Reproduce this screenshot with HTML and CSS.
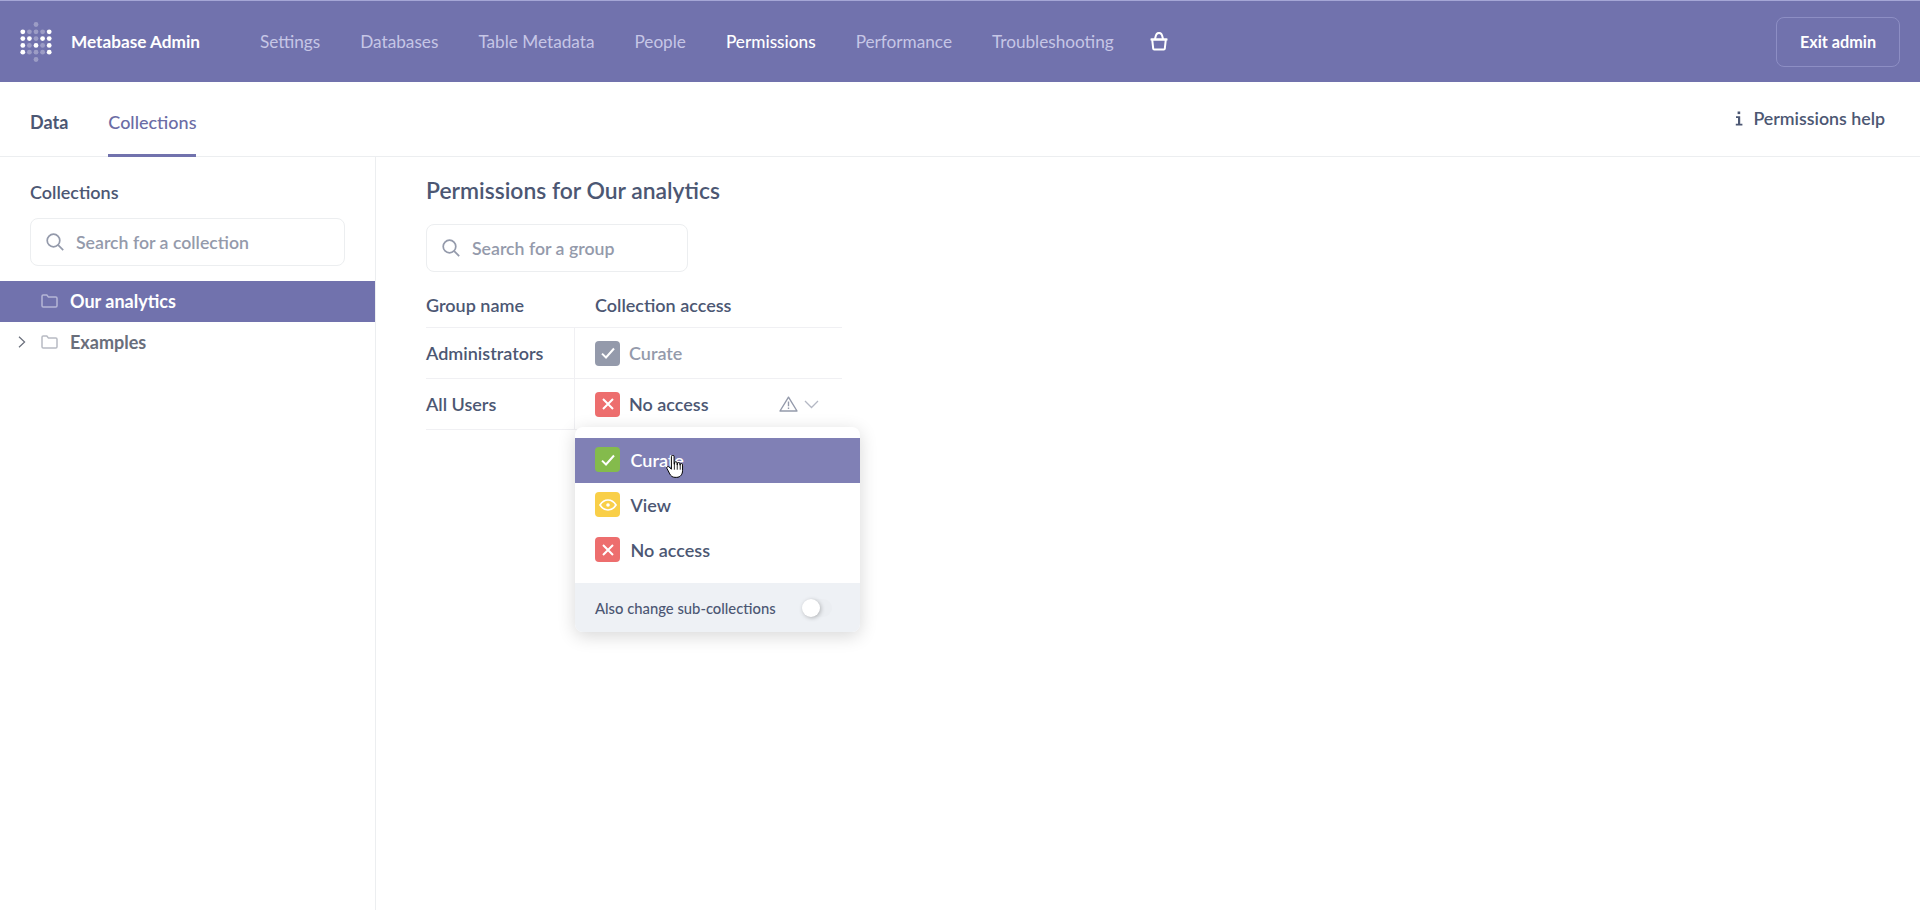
FILE: index.html
```html
<!DOCTYPE html>
<html lang="en">
<head>
  <meta charset="UTF-8">
  <title>Permissions - Metabase Admin</title>
  <link rel="stylesheet" href="styles.css">
</head>
<body>
  <header class="topbar">
    <div class="brand">
      <svg class="brand-logo" width="32" height="40" viewBox="0 0 32 40" fill="#fff">
        <g opacity="0.3">
          <circle cx="16" cy="2.5" r="2.4"/><circle cx="16" cy="37.5" r="2.4"/>
          <circle cx="9.4" cy="9.8" r="2.4"/><circle cx="16" cy="9.8" r="2.4"/><circle cx="22.6" cy="9.8" r="2.4"/>
          <circle cx="16" cy="16.6" r="2.4"/>
          <circle cx="9.4" cy="23.4" r="2.4"/><circle cx="22.6" cy="23.4" r="2.4"/>
          <circle cx="9.4" cy="30.2" r="2.4"/><circle cx="16" cy="30.2" r="2.4"/><circle cx="22.6" cy="30.2" r="2.4"/>
        </g>
        <circle cx="2.8" cy="9.8" r="2.4"/><circle cx="29.2" cy="9.8" r="2.4"/>
        <circle cx="2.8" cy="16.6" r="2.4"/><circle cx="9.4" cy="16.6" r="2.4"/><circle cx="22.6" cy="16.6" r="2.4"/><circle cx="29.2" cy="16.6" r="2.4"/>
        <circle cx="2.8" cy="23.4" r="2.4"/><circle cx="16" cy="23.4" r="2.4"/><circle cx="29.2" cy="23.4" r="2.4"/>
        <circle cx="2.8" cy="30.2" r="2.4"/><circle cx="29.2" cy="30.2" r="2.4"/>
      </svg>
      <span class="brand-name">Metabase Admin</span>
    </div>
    <nav class="topnav">
      <a>Settings</a>
      <a>Databases</a>
      <a>Table Metadata</a>
      <a>People</a>
      <a class="active">Permissions</a>
      <a>Performance</a>
      <a>Troubleshooting</a>
      <svg class="bag" width="18" height="19" viewBox="0 0 18 19" fill="none" stroke="#fff" stroke-width="2">
        <path d="M2.200 7.500h13.600l-1 9.200a1 1 0 0 1-1 .9H4.200a1 1 0 0 1-1-.9z"/>
        <path d="M.5 7.500h17M4.800 7.500L6 3.200a3.100 3.100 0 0 1 6 0l1.200 4.300"/>
      </svg>
    </nav>
    <button class="exit-btn">Exit admin</button>
  </header>

  <div class="tabbar">
    <div class="tabs">
      <a class="tab">Data</a>
      <a class="tab active">Collections</a>
    </div>
    <a class="help">
      <svg width="8" height="15" viewBox="0 0 8 15" fill="#4c5773">
        <rect x="2.6" y="0.5" width="2.6" height="2.6"/>
        <path d="M1 5.2h4.2v7.6H7.4v1.7H.8v-1.7h2.2V6.9H1z"/>
      </svg>
      Permissions help
    </a>
  </div>

  <div class="content">
    <aside class="sidebar">
      <div class="side-top">
        <h4 class="side-title">Collections</h4>
        <div class="search search-side">
          <svg class="search-icon" width="18" height="18" viewBox="0 0 18 18" fill="none" stroke="#949aab" stroke-width="1.700">
            <circle cx="7.500" cy="7.500" r="6.300"/><path d="M12.200 12.200l5 5"/>
          </svg>
          <span>Search for a collection</span>
        </div>
      </div>
      <div class="tree-row selected">
        <svg class="folder" width="17" height="14" viewBox="0 0 17 14" fill="none" stroke="#b5b6d6" stroke-width="1.5">
          <path d="M1 2.200A1.200 1.200 0 0 1 2.200 1h3.600l1.600 2h7.400A1.200 1.200 0 0 1 16 4.200v7.600a1.200 1.200 0 0 1-1.200 1.200H2.200A1.200 1.200 0 0 1 1 11.800z"/>
        </svg>
        Our analytics
      </div>
      <div class="tree-row">
        <svg class="caret" width="8" height="12" viewBox="0 0 8 12" fill="none" stroke="#696e7b" stroke-width="1.2">
          <path d="M1 .8L6.600 6 1 11.200"/>
        </svg>
        <svg class="folder" width="17" height="14" viewBox="0 0 17 14" fill="none" stroke="#b8bbc3" stroke-width="1.5">
          <path d="M1 2.200A1.200 1.200 0 0 1 2.200 1h3.600l1.600 2h7.400A1.200 1.200 0 0 1 16 4.200v7.600a1.200 1.200 0 0 1-1.200 1.200H2.200A1.200 1.200 0 0 1 1 11.800z"/>
        </svg>
        Examples
      </div>
    </aside>

    <main class="main">
      <h2 class="page-title">Permissions for Our analytics</h2>
      <div class="search search-group">
        <svg class="search-icon" width="18" height="18" viewBox="0 0 18 18" fill="none" stroke="#949aab" stroke-width="1.700">
          <circle cx="7.500" cy="7.500" r="6.300"/><path d="M12.200 12.200l5 5"/>
        </svg>
        <span>Search for a group</span>
      </div>

      <div class="perm-table">
        <div class="perm-row perm-head">
          <div class="col-name">Group name</div>
          <div class="col-access">Collection access</div>
        </div>
        <div class="perm-row">
          <div class="col-name">Administrators</div>
          <div class="col-access">
            <span class="badge grey">
              <svg width="16" height="16" viewBox="0 0 16 16" fill="none" stroke="#fff" stroke-width="2"><path d="M2 8.600l4 3.900 8-9"/></svg>
            </span>
            <span class="muted">Curate</span>
          </div>
        </div>
        <div class="perm-row">
          <div class="col-name">All Users</div>
          <div class="col-access">
            <span class="badge red">
              <svg width="14" height="14" viewBox="0 0 14 14" fill="none" stroke="#fff" stroke-width="2"><path d="M2 2l10 10M12 2L2 12"/></svg>
            </span>
            No access
            <span class="row-icons">
              <svg width="19" height="16" viewBox="0 0 19 16" fill="none" stroke="#949aab" stroke-width="1.400">
                <path d="M9.500 1.200L18 15H1z" stroke-linejoin="round"/><path d="M9.500 5.600v4.600M9.500 11.400v1.600"/>
              </svg>
              <svg width="15" height="9" viewBox="0 0 15 9" fill="none" stroke="#b4b8c4" stroke-width="1.300"><path d="M1 1l6.500 6.500L14 1"/></svg>
            </span>
          </div>
        </div>

        <div class="popover">
          <ul class="menu">
            <li class="menu-item hover">
              <span class="badge green">
                <svg width="16" height="16" viewBox="0 0 16 16" fill="none" stroke="#fff" stroke-width="2"><path d="M2 8.600l4 3.900 8-9"/></svg>
              </span>
              Curate
            </li>
            <li class="menu-item">
              <span class="badge yellow">
                <svg width="18" height="12" viewBox="0 0 18 12" fill="none" stroke="#fff" stroke-width="1.700">
                  <path d="M1 6c2-3.200 4.800-5 8-5s6 1.800 8 5c-2 3.200-4.800 5-8 5s-6-1.800-8-5z"/><circle cx="9" cy="6" r="1.800" fill="#fff" stroke="none"/>
                </svg>
              </span>
              View
            </li>
            <li class="menu-item">
              <span class="badge red">
                <svg width="14" height="14" viewBox="0 0 14 14" fill="none" stroke="#fff" stroke-width="2"><path d="M2 2l10 10M12 2L2 12"/></svg>
              </span>
              No access
            </li>
          </ul>
          <div class="popover-foot">
            <span>Also change sub-collections</span>
            <span class="toggle"><span class="knob"></span></span>
          </div>
          <svg class="cursor" width="18" height="24" viewBox="0 0 20 26">
            <path d="M6 1.500a1.500 1.500 0 0 1 3 0V10h.5V8.500a1.400 1.400 0 0 1 2.800 0V10.500h.4V9.500a1.400 1.400 0 0 1 2.800 0v1.500h.3v-.5a1.300 1.300 0 0 1 2.600 0V17c0 4-2.400 7.500-6.500 7.500H10c-3 0-4.500-1.500-5.800-3.800L1 14.500c-.7-1.500 1.300-2.800 2.500-1.500L6 15.500z" fill="#fff" stroke="#000" stroke-width="1.100" stroke-linejoin="round"/>
            <path d="M9.300 10v6M12.500 10v6M15.800 11v5" stroke="#000" stroke-width=".9" fill="none"/>
          </svg>
        </div>
      </div>
    </main>
  </div>
</body>
</html>
```

FILE: styles.css
```css
* {
  box-sizing: border-box;
}
html, body {
  height: 100%;
}
body {
  margin: 0;
  font-family: Lato, "Open Sans", sans-serif;
  color: #4c5773;
  background: #fff;
  overflow: hidden;
}

/* top bar */
.topbar {
  height: 81px;
  margin-top: 1px;
  background: #7172ad;
  box-shadow: 0 -1px 0 #a5a6d6;
  display: flex;
  align-items: center;
  padding: 0 20px 0 20px;
}
.brand {
  display: flex;
  align-items: center;
  width: 240px;
  flex-shrink: 0;
}
.brand-logo {
  margin-right: 19px;
}
.brand-name {
  color: #fff;
  font-size: 17.200px;
  font-weight: 700;
}
.topnav {
  display: flex;
  align-items: center;
  gap: 40px;
  flex: 1;
  font-size: 17.200px;
  color: #c6c6e6;
}
.topnav .active {
  color: #fff;
  font-weight: 500;
}
.bag {
  margin-left: -4px;
}
.exit-btn {
  width: 124px;
  height: 50px;
  background: transparent;
  border: 1px solid #8d8ec4;
  border-radius: 8px;
  color: #fff;
  font: 700 16.200px Lato, sans-serif;
}

/* tabs */
.tabbar {
  height: 75px;
  border-bottom: 1px solid #eceef0;
  display: flex;
  justify-content: space-between;
  padding: 0 35px 0 30px;
}
.tabs {
  display: flex;
  gap: 40px;
}
.tab {
  font-size: 18px;
  font-weight: 700;
  height: 75px;
  line-height: 80px;
}
.tab.active {
  color: #6b6ca5;
  font-weight: 500;
  border-bottom: 3px solid #7172ad;
}
.help {
  display: flex;
  align-items: center;
  gap: 10px;
  font-size: 17.800px;
  font-weight: 600;
  height: 72px;
}

.content {
  display: flex;
  height: 753px;
}

/* sidebar */
.sidebar {
  width: 376px;
  border-right: 1px solid #eceef0;
  flex-shrink: 0;
}
.side-top {
  padding: 0 30px;
}
.side-title {
  margin: 0;
  padding-top: 24px;
  height: 61px;
  font-size: 18px;
  font-weight: 600;
  line-height: 22px;
}
.search {
  display: flex;
  align-items: center;
  height: 48px;
  border: 1px solid #eceef0;
  border-radius: 8px;
  padding-left: 15px;
  gap: 12px;
  color: #949aab;
  font-size: 17.700px;
  font-weight: 600;
}
.search-icon {
  flex-shrink: 0;
}
.search-side {
  margin-bottom: 15px;
}
.tree-row {
  height: 41px;
  display: flex;
  align-items: center;
  padding: 0 0 2px 41px;
  font-size: 18px;
  font-weight: 700;
  color: #696e7b;
  position: relative;
}
.tree-row.selected {
  background: #7172ad;
  color: #fff;
}
.folder {
  margin-right: 12px;
}
.caret {
  position: absolute;
  left: 18px;
  top: 14px;
}

/* main panel */
.main {
  padding: 0 0 0 50px;
  flex: 1;
}
.page-title {
  margin: 0;
  padding-top: 19px;
  height: 67px;
  font-size: 22.900px;
  font-weight: 600;
  line-height: 28px;
}
.search-group {
  width: 262px;
}
.perm-table {
  width: 416px;
  margin-top: 8px;
  position: relative;
}
.perm-row {
  display: flex;
  height: 51px;
  border-bottom: 1px solid #f0f0f3;
  font-size: 18px;
  font-weight: 600;
  align-items: stretch;
}
.perm-row.perm-head {
  height: 48px;
  padding-top: 2px;
}
.col-name {
  width: 149px;
  display: flex;
  align-items: center;
  border-right: 1px solid #f0f0f3;
}
.perm-head .col-name {
  border-right: none;
}
.col-access {
  flex: 1;
  display: flex;
  align-items: center;
  padding-left: 20px;
  gap: 9px;
}
.muted {
  color: #949aab;
}
.badge {
  width: 25px;
  height: 25px;
  border-radius: 4px;
  display: flex;
  align-items: center;
  justify-content: center;
  flex-shrink: 0;
}
.badge.grey { background: #949aab; }
.badge.red { background: #ed6e6e; }
.badge.green { background: #84bb4c; }
.badge.yellow { background: #f9cf48; }
.row-icons {
  margin-left: auto;
  margin-right: 23px;
  display: flex;
  align-items: center;
  gap: 6px;
}

/* dropdown */
.popover {
  position: absolute;
  left: 149px;
  top: 147px;
  width: 285px;
  background: #fff;
  border-radius: 8px;
  box-shadow: 0 4px 18px rgba(0, 0, 0, 0.16);
  padding-top: 11px;
}
.menu {
  list-style: none;
  margin: 0;
  padding: 0 0 10px;
}
.menu-item {
  height: 45px;
  display: flex;
  align-items: center;
  gap: 10.500px;
  padding: 0 0 2px 20px;
  font-size: 18px;
  font-weight: 600;
}
.menu-item.hover {
  background: #8080b5;
  color: #fff;
}
.popover-foot {
  height: 49px;
  background: #eef1f5;
  border-radius: 0 0 8px 8px;
  display: flex;
  align-items: center;
  padding-left: 20px;
  font-size: 14.800px;
  font-weight: 500;
}
.toggle {
  margin-left: 26px;
  width: 30px;
  height: 18px;
  border-radius: 9px;
  background: #ebeef2;
  display: flex;
  align-items: center;
}
.knob {
  width: 18px;
  height: 18px;
  border-radius: 50%;
  background: #fff;
  box-shadow: 1px 1px 4px rgba(0, 0, 0, 0.25);
}
.cursor {
  position: absolute;
  left: 91px;
  top: 28px;
}
```
